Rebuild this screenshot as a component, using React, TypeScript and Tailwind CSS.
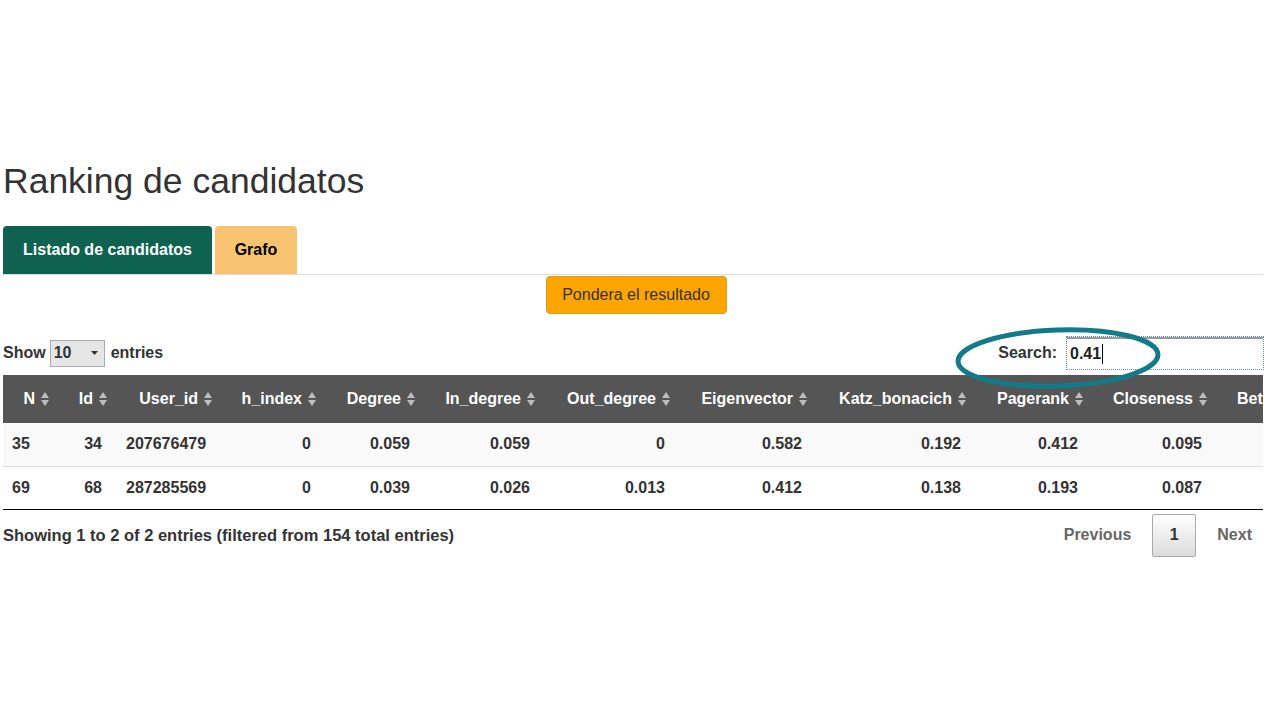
import React from "react";

const columns = [
  { key: "n", label: "N", width: 51, align: "left" },
  { key: "id", label: "Id", width: 58, align: "right" },
  { key: "user", label: "User_id", width: 105, align: "left" },
  { key: "h", label: "h_index", width: 104, align: "right" },
  { key: "deg", label: "Degree", width: 99, align: "right" },
  { key: "indeg", label: "In_degree", width: 120, align: "right" },
  { key: "outdeg", label: "Out_degree", width: 135, align: "right" },
  { key: "eig", label: "Eigenvector", width: 137, align: "right" },
  { key: "katz", label: "Katz_bonacich", width: 159, align: "right" },
  { key: "pr", label: "Pagerank", width: 117, align: "right" },
  { key: "clo", label: "Closeness", width: 124, align: "right" },
  { key: "bet", label: "Betweenness", width: 140, align: "left" },
];

const rows = [
  ["35", "34", "207676479", "0", "0.059", "0.059", "0", "0.582", "0.192", "0.412", "0.095", ""],
  ["69", "68", "287285569", "0", "0.039", "0.026", "0.013", "0.412", "0.138", "0.193", "0.087", ""],
];

const tableWidth = columns.reduce((s, c) => s + c.width, 0);

function SortIcon() {
  return (
    <svg width="10" height="16" viewBox="0 0 10 16" className="ml-[5px] shrink-0">
      <path d="M5 1 L9 7 L1 7 Z" fill="#bdbdbd" />
      <path d="M5 15 L9 9 L1 9 Z" fill="#bdbdbd" />
    </svg>
  );
}

export default function App() {
  return (
    <div className="relative min-h-[720px] w-[1280px] bg-white font-['Liberation_Sans',Arial,sans-serif] text-[#333]">
      <div className="w-[1263px] pl-[3px] pt-[157px]">
        <h1 className="text-[35.5px] leading-[48px] font-normal">Ranking de candidatos</h1>

        <div className="mt-[21px] flex border-b border-[#ddd]">
          <div className="flex h-[48px] w-[209px] items-center justify-center rounded-t-[4px] bg-[#0f6150] text-[16px] font-bold text-white">
            Listado de candidatos
          </div>
          <div className="ml-[3px] flex h-[48px] w-[82px] items-center justify-center rounded-t-[4px] bg-[#f8c471] text-[16px] font-bold text-black">
            Grafo
          </div>
        </div>

        <div className="flex justify-center pl-[6px]">
          <button className="mt-px h-[38px] w-[181px] rounded-[4px] border border-[#e09a1c] bg-[#ffa500] text-[16px] text-[#333]">
            Pondera el resultado
          </button>
        </div>

        <div className="mt-[23px] flex h-[32px] items-center justify-between">
          <div className="flex items-center text-[16px] font-bold">
            <span>Show</span>
            <div className="ml-[4px] flex h-[27px] w-[55px] items-center justify-between border border-[#aaa] bg-[#e6e6e6] pl-[3px] pr-[6px]">
              <span>10</span>
              <svg width="7" height="4" viewBox="0 0 7 4">
                <path d="M0 0 L7 0 L3.5 4 Z" fill="#333" />
              </svg>
            </div>
            <span className="ml-[6px]">entries</span>
          </div>
          <div className="flex items-center text-[16px] font-bold">
            <span>Search:</span>
            <div className="ml-[10px] flex h-[32px] w-[196px] items-center border-t-2 border-[#999] pl-[3px] font-bold text-[#222] outline-1 outline-dotted outline-[#6a8aa8]">
              <span className="font-bold">0.41</span>
              <span className="ml-px h-[20px] w-px bg-black" />
            </div>
          </div>
        </div>

        <div className="mt-[6px] overflow-hidden">
          <table className="table-fixed border-collapse text-[16px] font-bold" style={{ width: tableWidth }}>
            <colgroup>
              {columns.map((c) => (
                <col key={c.key} style={{ width: c.width }} />
              ))}
            </colgroup>
            <thead>
              <tr className="h-[48px] bg-[#555] text-white">
                {columns.map((c) => (
                  <th key={c.key} className={c.key === "bet" ? "pl-[25px] font-bold" : "pr-[4px] font-bold"}>
                    <div
                      className={
                        "flex items-center whitespace-nowrap " + (c.key === "bet" ? "justify-start" : "justify-end")
                      }
                    >
                      {c.label}
                      <SortIcon />
                    </div>
                  </th>
                ))}
              </tr>
            </thead>
            <tbody>
              {rows.map((r, i) => (
                <tr
                  key={i}
                  className={
                    "h-[43px] " +
                    (i === 0 ? "bg-[#f9f9f9] border-b border-[#ddd]" : "bg-white border-b border-black")
                  }
                >
                  {r.map((v, j) => (
                    <td
                      key={j}
                      className={
                        columns[j].align === "left"
                          ? j === 2
                            ? "pl-[14px] text-left whitespace-nowrap"
                            : "pl-[9px] text-left whitespace-nowrap"
                          : "pr-[10px] text-right whitespace-nowrap"
                      }
                    >
                      {v}
                    </td>
                  ))}
                </tr>
              ))}
            </tbody>
          </table>
        </div>

        <div className="mt-[4px] flex items-center justify-between">
          <div className="text-[16.5px] font-bold">Showing 1 to 2 of 2 entries (filtered from 154 total entries)</div>
          <div className="flex items-center text-[16px] font-bold">
            <span className="text-[#666]">Previous</span>
            <span className="ml-[21px] flex h-[43px] w-[44px] items-center justify-center rounded-[2px] border border-[#aaa] bg-gradient-to-b from-white to-[#dcdcdc] text-[#333]">
              1
            </span>
            <span className="ml-[21px] mr-[11px] text-[#666]">Next</span>
          </div>
        </div>
      </div>

      <svg
        className="pointer-events-none absolute left-[950px] top-[322px]"
        width="220"
        height="72"
        viewBox="0 0 220 72"
      >
        <ellipse
          cx="108"
          cy="36"
          rx="100"
          ry="28"
          fill="none"
          stroke="#127a88"
          strokeWidth="5"
          transform="rotate(-2 108 36)"
        />
      </svg>
    </div>
  );
}
